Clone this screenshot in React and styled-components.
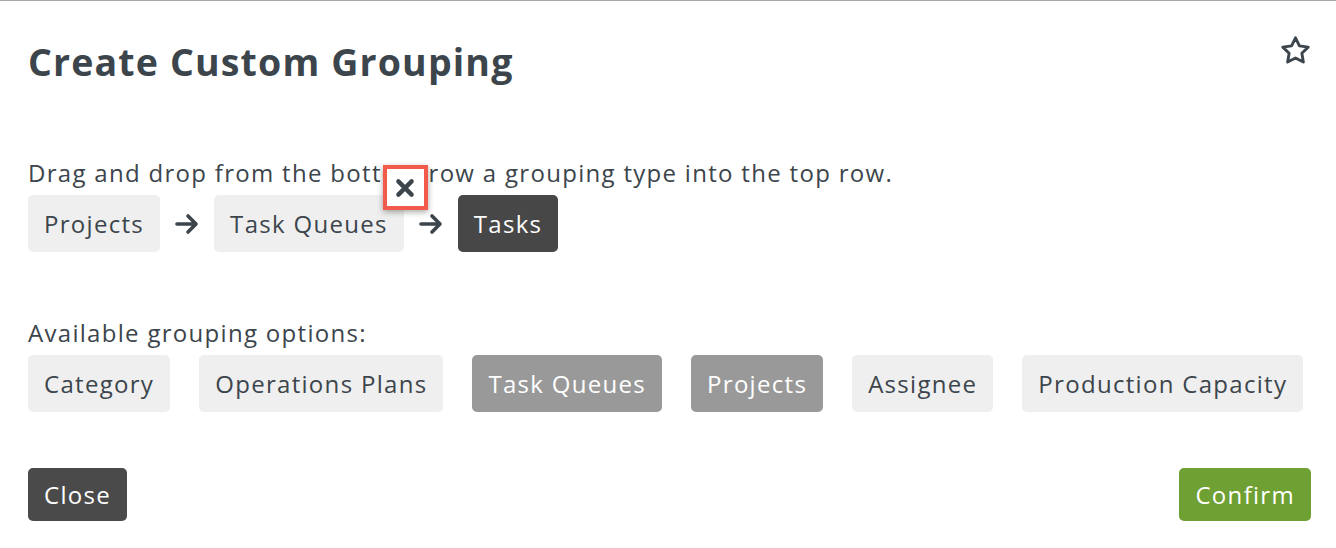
import React from 'react';
import styled, { createGlobalStyle } from 'styled-components';

const GlobalStyle = createGlobalStyle`
  body {
    margin: 0;
    background: #fff;
    font-family: "Open Sans", Lato, sans-serif;
    color: #3c454c;
  }
`;

const Modal = styled.div`
  width: 1336px;
  height: 548px;
  box-sizing: border-box;
  border-top: 1px solid #a9a9a9;
  padding: 0 25px 0 28px;
  display: flex;
  flex-direction: column;
`;

const Header = styled.div`
  display: flex;
  justify-content: space-between;
  align-items: flex-start;
  height: 156px;
`;

const Title = styled.h1`
  margin: 35px 0 0;
  font-size: 37.5px;
  font-weight: 700;
  letter-spacing: 1.15px;
  color: #3c454c;
`;

const StarButton = styled.button`
  margin: 33px -1px 0 0;
  border: none;
  background: none;
  padding: 0;
  color: #3c454c;
  display: flex;
`;

const Label = styled.p`
  margin: 0;
  font-size: 24px;
  letter-spacing: 1.3px;
  line-height: 32px;
  color: #3c454c;
`;

const ChipRow = styled.div`
  display: flex;
  align-items: center;
  gap: ${(p) => p.gap}px;
  margin-top: 6px;
  position: relative;
`;

const chipColors = {
  light: { bg: '#efefef', fg: '#3c454c' },
  dark: { bg: '#474747', fg: '#ffffff' },
  muted: { bg: '#999999', fg: '#ffffff' },
};

const Chip = styled.div`
  height: 57px;
  box-sizing: border-box;
  padding: 0 16px;
  display: flex;
  align-items: center;
  border-radius: 5px;
  font-size: 24px;
  letter-spacing: 1.3px;
  background: ${(p) => chipColors[p.variant].bg};
  color: ${(p) => chipColors[p.variant].fg};
  white-space: nowrap;
`;

const ChipWrap = styled.div`
  position: relative;
`;

const RemoveBadge = styled.div`
  position: absolute;
  top: -30px;
  right: -24px;
  width: 45px;
  height: 45px;
  box-sizing: border-box;
  border: 4px solid #f25a4b;
  background: #fff;
  box-shadow: 0 2px 6px rgba(0, 0, 0, 0.35);
  display: flex;
  align-items: center;
  justify-content: center;
  color: #3c454c;
`;

const Arrow = () => (
  <svg width="26" height="22" viewBox="0 0 26 22" fill="none" stroke="#3c454c" strokeWidth="3.6" strokeLinecap="round" strokeLinejoin="round">
    <path d="M3 11h19M14 3l8 8-8 8" />
  </svg>
);

const ArrowSlot = styled.div`
  display: flex;
`;

const Section = styled.div`
  margin-top: ${(p) => p.top}px;
`;

const Footer = styled.div`
  display: flex;
  justify-content: space-between;
  margin-top: 56px;
`;

const ActionButton = styled.button`
  height: 53px;
  padding: 0 16px;
  border: none;
  border-radius: 5px;
  font-family: inherit;
  font-size: 24px;
  letter-spacing: 1.3px;
  color: #fff;
  background: ${(p) => (p.primary ? '#6ea033' : '#4a4a4a')};
`;

const selected = ['Projects', 'Task Queues', 'Tasks'];
const options = [
  { name: 'Category', used: false },
  { name: 'Operations Plans', used: false },
  { name: 'Task Queues', used: true },
  { name: 'Projects', used: true },
  { name: 'Assignee', used: false },
  { name: 'Production Capacity', used: false },
];

export default function App() {
  return (
    <>
      <GlobalStyle />
      <Modal>
        <Header>
          <Title>Create Custom Grouping</Title>
          <StarButton>
            <svg width="33" height="33" viewBox="0 0 24 24" fill="none" stroke="currentColor" strokeWidth="2.1" strokeLinejoin="round">
              <path d="M12 2.8l2.85 5.8 6.4.93-4.63 4.5 1.1 6.37L12 17.4l-5.72 3 1.1-6.37-4.63-4.5 6.4-.93z" />
            </svg>
          </StarButton>
        </Header>
        <Label>Drag and drop from the bottom row a grouping type into the top row.</Label>
        <ChipRow gap={14}>
          {selected.map((name, i) => (
            <React.Fragment key={name}>
              {i > 0 && (
                <ArrowSlot>
                  <Arrow />
                </ArrowSlot>
              )}
              <ChipWrap>
                <Chip variant={i === selected.length - 1 ? 'dark' : 'light'}>{name}</Chip>
                {name === 'Task Queues' && (
                  <RemoveBadge>
                    <svg width="22" height="22" viewBox="0 0 20 20" stroke="currentColor" strokeWidth="4" strokeLinecap="round">
                      <path d="M4 4l12 12M16 4L4 16" />
                    </svg>
                  </RemoveBadge>
                )}
              </ChipWrap>
            </React.Fragment>
          ))}
        </ChipRow>
        <Section top={65}>
          <Label>Available grouping options:</Label>
          <ChipRow gap={29}>
            {options.map((o) => (
              <Chip key={o.name} variant={o.used ? 'muted' : 'light'}>{o.name}</Chip>
            ))}
          </ChipRow>
        </Section>
        <Footer>
          <ActionButton>Close</ActionButton>
          <ActionButton primary>Confirm</ActionButton>
        </Footer>
      </Modal>
    </>
  );
}
